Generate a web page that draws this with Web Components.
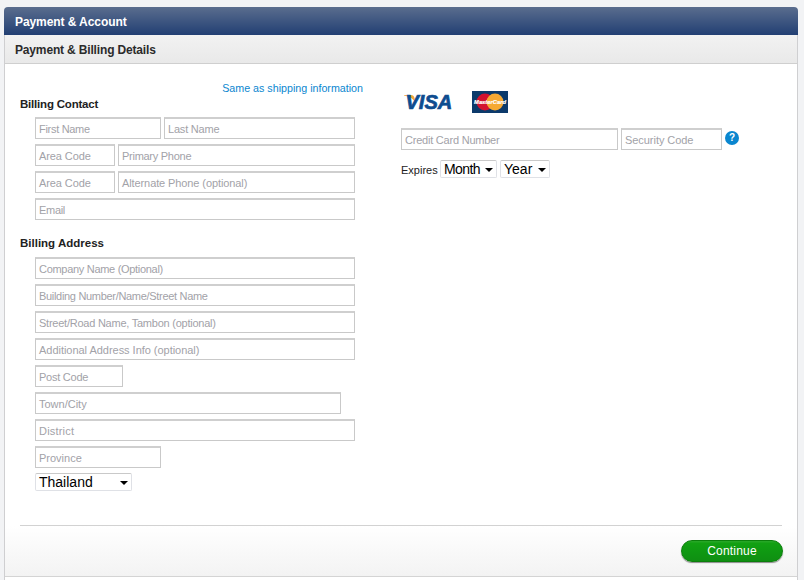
<!DOCTYPE html>
<html><head><meta charset="utf-8">
<style>
html,body{margin:0;padding:0;background:#f2f3f5;}
body{width:804px;height:580px;overflow:hidden;font-family:"Liberation Sans",Arial,sans-serif;}
</style></head><body>
<pay-panel>
  <span slot="title">Payment &amp; Account</span>
  <span slot="sub">Payment &amp; Billing Details</span>
  <billing-form slot="left"></billing-form>
  <card-form slot="right"></card-form>
  <pay-button slot="action">Continue</pay-button>
</pay-panel>
<script>
function def(name, html){
  customElements.define(name, class extends HTMLElement{
    constructor(){super();this.attachShadow({mode:'open'}).innerHTML=html;}
  });
}
def('pay-panel',`<style>
:host{display:block;box-sizing:border-box;width:794px;margin:7px 6px 0 4px;height:573px}
.head{height:28px;box-sizing:border-box;padding:2px 11px 0;display:flex;align-items:center;color:#fff;font:bold 12px "Liberation Sans",Arial,sans-serif;letter-spacing:-.08px;border-radius:4px 4px 0 0;background:linear-gradient(#5a6d8e,#223f73)}
.box{border:solid #cfcfd1;border-width:0 1px;height:545px;margin:0;display:flex;flex-direction:column;background:#fff;box-sizing:border-box}
.sub{height:29px;box-sizing:border-box;flex:none;padding:2px 10px 0;display:flex;align-items:center;font:bold 12px "Liberation Sans",Arial,sans-serif;letter-spacing:-.16px;color:#2b2b2b;background:linear-gradient(#f2f2f2,#e9e9e9);border-bottom:1px solid #cfcfcf}
.cols{flex:none;height:461px;display:flex;box-sizing:border-box;}
.l{flex:none;width:396px}.r{flex:1}
.foot{flex:none;height:51px;margin:0;background:linear-gradient(#fff,#f3f3f3);box-sizing:border-box;padding:14px 14px 0 15px;display:flex;justify-content:flex-end;border-bottom:1px solid #d4d4d4}
.rule{height:1px;background:#d2d2d2;margin:0 15px;flex:none}
</style>
<div class="head"><slot name="title"></slot></div>
<div class="box">
<div class="sub"><slot name="sub"></slot></div>
<div class="cols"><div class="l"><slot name="left"></slot></div><div class="r"><slot name="right"></slot></div></div>
<div class="rule"></div>
<div class="foot"><slot name="action"></slot></div>
</div>`);
def('text-field',`<style>
:host{display:block;box-sizing:border-box;height:22px;border:1px solid #c9c9c9;border-top:2px solid #cfcfcf;background:#fff;color:#a2a2a8;font:11px "Liberation Sans",Arial,sans-serif;line-height:21px;padding-left:3px;white-space:nowrap;overflow:hidden}
</style><slot></slot>`);
def('drop-select',`<style>
:host{display:flex;box-sizing:border-box;height:18px;align-items:center;justify-content:space-between;background:#fff;border:1px solid #dfe1e6;border-top-color:#c9c9c9;border-radius:2px;padding:0 3px 0 3px;font:14px "Liberation Sans",Arial,sans-serif;color:#000}
i{width:0;height:0;border:4px solid transparent;border-top:4px solid #000;border-bottom:0;margin-top:1px}
</style><span><slot></slot></span><i></i>`);
def('field-row',`<style>:host{display:flex;gap:3px;margin-bottom:5px}</style><slot></slot>`);
def('section-title',`<style>:host{display:block;font:bold 11.5px "Liberation Sans",Arial,sans-serif;color:#222;line-height:14px}</style><slot></slot>`);
def('billing-form',`<style>
:host{display:block;padding:17px 0 0 15px;font-family:"Liberation Sans",Arial,sans-serif}
a{display:block;width:343px;text-align:right;font-size:10.7px;line-height:14px;color:#0a86cf;text-decoration:none;margin-bottom:2px}
.fields{margin:6px 0 0 15px;width:320px}
.a{margin-top:16px}.fields.b{margin-top:7px}
</style>
<a href="#">Same as shipping information</a>
<section-title style="letter-spacing:-.2px">Billing Contact</section-title>
<div class="fields">
<field-row><text-field style="width:126px;letter-spacing:-.3px">First Name</text-field><text-field style="width:191px;letter-spacing:-.2px">Last Name</text-field></field-row>
<field-row><text-field style="width:80px;letter-spacing:-.1px">Area Code</text-field><text-field style="width:237px;letter-spacing:-.27px">Primary Phone</text-field></field-row>
<field-row><text-field style="width:80px;letter-spacing:-.1px">Area Code</text-field><text-field style="width:237px;letter-spacing:-.1px">Alternate Phone (optional)</text-field></field-row>
<field-row><text-field style="width:320px;letter-spacing:-.3px">Email</text-field></field-row>
</div>
<section-title class="a">Billing Address</section-title>
<div class="fields b">
<field-row><text-field style="width:320px;letter-spacing:-.3px">Company Name (Optional)</text-field></field-row>
<field-row><text-field style="width:320px;letter-spacing:-.31px">Building Number/Name/Street Name</text-field></field-row>
<field-row><text-field style="width:320px;letter-spacing:-.24px">Street/Road Name, Tambon (optional)</text-field></field-row>
<field-row><text-field style="width:320px;letter-spacing:-.03px">Additional Address Info (optional)</text-field></field-row>
<field-row><text-field style="width:88px;letter-spacing:-.25px">Post Code</text-field></field-row>
<field-row><text-field style="width:306px">Town/City</text-field></field-row>
<field-row><text-field style="width:320px;letter-spacing:.2px">District</text-field></field-row>
<field-row><text-field style="width:126px">Province</text-field></field-row>
<drop-select style="width:97px">Thailand</drop-select>
</div>`);
def('card-form',`<style>
:host{display:block;padding:26px 0 0 0;font-family:"Liberation Sans",Arial,sans-serif}
.logos{display:flex;gap:17px;align-items:center;height:24px;padding-left:2px;margin-bottom:14px}
.line{display:flex;gap:3px;align-items:center}
.q{width:14px;height:14px;border-radius:50%;background:#0a86cf;color:#fff;font:bold 10px/14px "Liberation Sans",Arial,sans-serif;text-align:center;margin-top:-2px}
.exp{display:flex;gap:3px;align-items:center;margin-top:10px;font-size:11px;color:#222}
.lbl{padding-top:2px;width:36px;white-space:nowrap}
.m{letter-spacing:-.6px}
svg{display:block}
</style>
<div class="logos">
<svg width="52" height="24" viewBox="0 0 52 24"><path d="M1 5H8C10 5 11 6 11.500 8L13 14C11 9 7 6.500 1 5.500Z" fill="#f2a73b"/><text x="2.500" y="18.500" font-family="Liberation Sans" font-weight="700" font-style="italic" font-size="20" fill="#0d4c8f" stroke="#0d4c8f" stroke-width=".7">VISA</text></svg>
<svg width="36" height="22" viewBox="0 0 36 22"><rect width="36" height="22" fill="#0c3a6b"/><circle cx="13" cy="11" r="8.500" fill="#d3122f"/><circle cx="23" cy="11" r="8.500" fill="#f6a933"/><text x="18" y="13" text-anchor="middle" font-family="Liberation Sans" font-weight="700" font-style="italic" font-size="5.800" fill="#fff" stroke="#fff" stroke-width=".2">MasterCard</text></svg>
</div>
<div class="line"><text-field style="width:217px;letter-spacing:-.22px">Credit Card Number</text-field><text-field style="width:101px;letter-spacing:-.05px">Security Code</text-field><span class="q">?</span></div>
<div class="exp"><span class="lbl">Expires</span><drop-select style="width:57px"><span class="m">Month</span></drop-select><drop-select style="width:50px">Year</drop-select></div>`);
def('pay-button',`<style>
:host{display:flex;align-items:center;justify-content:center;box-sizing:border-box;width:102px;height:22px;border-radius:11px;border:1px solid #0c7f0c;background:linear-gradient(#2aa92a 0,#12a012 12%,#0f9912 50%,#0f8f12);box-shadow:0 1px 1px #8a8a8a;color:#fff;font:12px "Liberation Sans",Arial,sans-serif;letter-spacing:.2px}
</style><slot></slot>`);
</script>
</body></html>
